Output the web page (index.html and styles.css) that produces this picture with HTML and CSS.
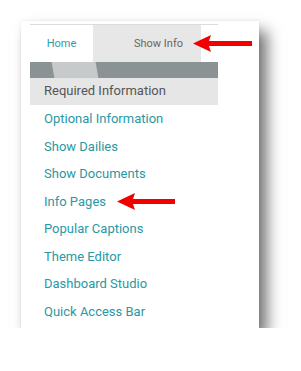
FILE: index.html
```html
<!DOCTYPE html>
<html lang="en">
<head>
    <meta charset="UTF-8">
    <meta name="viewport" content="width=device-width, initial-scale=1.0">
    <title>Show Info Menu</title>
    <link rel="stylesheet" href="styles.css">
</head>
<body>
    <div class="card">
        <div class="panel">
            <div class="tabs">
                <div class="tab active">Home</div>
                <div class="tab current">Show Info</div>
            </div>
            <div class="band"><span class="band-light"></span></div>
            <div class="menu">
                <div class="menu-item selected">Required Information</div>
                <div class="menu-item">Optional Information</div>
                <div class="menu-item">Show Dailies</div>
                <div class="menu-item">Show Documents</div>
                <div class="menu-item">Info Pages</div>
                <div class="menu-item">Popular Captions</div>
                <div class="menu-item">Theme Editor</div>
                <div class="menu-item">Dashboard Studio</div>
                <div class="menu-item">Quick Access Bar</div>
            </div>
        </div>

        <!-- callout arrows -->
        <svg class="arrow arrow-tab" width="59" height="17" viewBox="0 0 59 17">
            <polygon points="0,8.5 18,0 16,6 59,6 59,11 16,11 18,17" fill="#f20000"/>
        </svg>
        <svg class="arrow arrow-pages" width="58" height="17" viewBox="0 0 58 17">
            <polygon points="0,8.5 18,0 16,6 58,6 58,11 16,11 18,17" fill="#f20000"/>
        </svg>
    </div>
</body>
</html>
```

FILE: styles.css
```css
body {
    margin: 0;
    padding: 0;
    background-color: #ffffff;
    font-family: Roboto, "Liberation Sans", Arial, sans-serif;
}

.card {
    position: relative;
    margin: 21px 0 0 21px;
    width: 238px;
    height: 307px;
    padding: 3px 41px 0 9px;
    box-sizing: border-box;
    background-color: #ffffff;
    box-shadow: 8px 10px 14px rgba(0, 0, 0, 0.55), 0 0 3px rgba(0, 0, 0, 0.08);
}

.tabs {
    display: flex;
    height: 37px;
    border-top: 1px solid #dcdcdc;
}

.tab {
    display: flex;
    align-items: center;
    font-size: 11px;
}

.tab.active {
    width: 63px;
    justify-content: center;
    color: #2f9aa6;
    background-color: #ffffff;
}

.tab.current {
    width: 108px;
    padding-left: 41px;
    box-sizing: border-box;
    color: #666666;
    background-color: #e7e7e7;
}

.band {
    display: flex;
    height: 16px;
    background-color: #8b9293;
    overflow: hidden;
}

.band-light {
    width: 44px;
    margin-left: 23px;
    background-color: #c6cacb;
    transform: skewX(10deg);
}

.menu-item {
    height: 27.5px;
    line-height: 27.5px;
    padding-left: 14px;
    font-size: 13px;
    color: #2a98a4;
}

.menu-item.selected {
    height: 27px;
    line-height: 26px;
    color: #555555;
    background-color: #e6e6e6;
}

.arrow {
    position: absolute;
}

.arrow-tab {
    left: 172px;
    top: 14px;
}

.arrow-pages {
    left: 96px;
    top: 172px;
}
```
